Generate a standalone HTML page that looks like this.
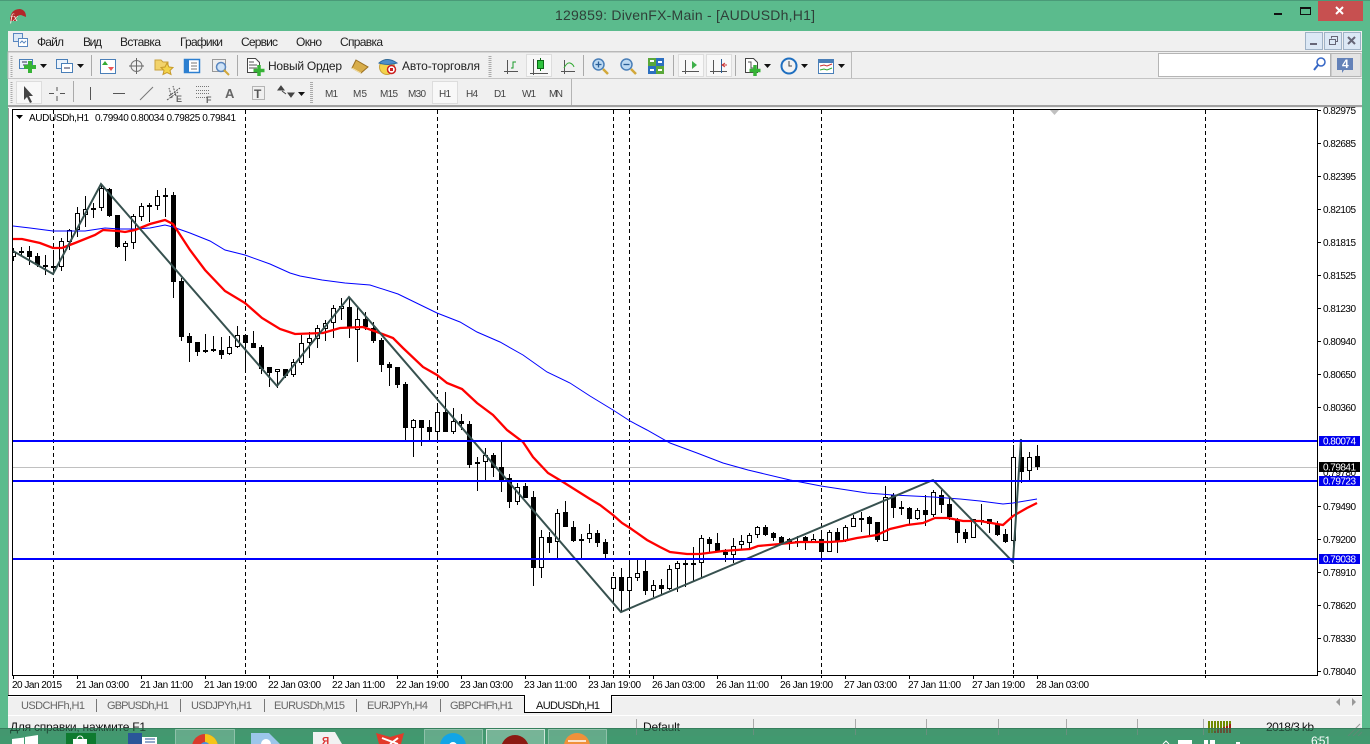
<!DOCTYPE html>
<html><head><meta charset="utf-8"><title>129859: DivenFX-Main</title>
<style>
html,body{margin:0;padding:0;width:1370px;height:744px;overflow:hidden;background:#5bbb8d}
svg{display:block;position:absolute;left:0;top:0}
text{font-family:"Liberation Sans",sans-serif;fill:#111}
.m{font-size:12px;fill:#222}
.tb{font-size:10px;fill:#444}
.p{font-size:10px;fill:#000}
.t{font-size:10px;fill:#000}
.tab{font-size:11px;fill:#666}
</style></head><body>
<svg width="1370" height="744" viewBox="0 0 1370 744" xmlns="http://www.w3.org/2000/svg">
<defs><clipPath id="c"><rect x="13" y="110" width="1304" height="565"/></clipPath></defs>
<!-- frame -->
<rect width="1370" height="744" fill="#5bbb8d"/>
<rect width="1370" height="1" fill="#4a9a78"/>
<text x="555" y="20" textLength="260" style="font-size:14px;fill:#2f3f38">129859: DivenFX-Main - [AUDUSDh,H1]</text>
<!-- logo -->
<path d="M10 21Q10 9 20 9Q26 10 26 17L21 15Q16 15 16 21Z" fill="#b3262a"/>
<text x="10" y="21" style="font-size:11px;font-style:italic;font-family:'Liberation Serif',serif;fill:#f4e8e0">fx</text>
<!-- window controls -->
<rect x="1274" y="13" width="8" height="2" fill="#111"/>
<rect x="1300.5" y="7.5" width="10" height="7" fill="none" stroke="#111"/><rect x="1300" y="7" width="11" height="2" fill="#111"/>
<rect x="1318" y="1" width="45" height="20" fill="#c75050"/>
<path d="M1336 7l7 7M1343 7l-7 7" stroke="#fff" stroke-width="2"/>
<!-- client -->
<rect x="8" y="31" width="1354" height="697" fill="#f0f0f0"/>
<rect x="8" y="51" width="1354" height="1" fill="#b4b4b4"/>
<rect x="8" y="105" width="1354" height="2" fill="#a0a0a0"/>
<!-- menu -->
<rect x="13.5" y="33.5" width="9" height="8" fill="#dce8f5" stroke="#5a87c0"/><rect x="18.5" y="38.5" width="9" height="8" fill="#fff" stroke="#5a87c0"/>
<path d="M20 43l2-2 2 2 2-2" stroke="#5a87c0" fill="none"/>
<text class="m" x="37" y="46" textLength="27">Файл</text>
<text class="m" x="83" y="46" textLength="19">Вид</text>
<text class="m" x="120" y="46" textLength="41">Вставка</text>
<text class="m" x="180" y="46" textLength="43">Графики</text>
<text class="m" x="241" y="46" textLength="37">Сервис</text>
<text class="m" x="296" y="46" textLength="26">Окно</text>
<text class="m" x="340" y="46" textLength="43">Справка</text>
<rect x="1305.5" y="32.5" width="17" height="17" fill="#dce8f5" stroke="#9fb2c6"/><rect x="1310" y="43" width="7" height="2" fill="#667"/>
<rect x="1324.5" y="32.5" width="17" height="17" fill="#dce8f5" stroke="#9fb2c6"/><path d="M1331.5 38.5v-2h6v5h-2M1329.5 39.5h6v5h-6z" fill="none" stroke="#667"/>
<rect x="1343.5" y="32.5" width="17" height="17" fill="#dce8f5" stroke="#9fb2c6"/><path d="M1348 37l7 7M1355 37l-7 7" stroke="#667" stroke-width="2"/>
<!-- toolbar 1 -->
<rect x="8" y="52" width="843.5" height="26.5" fill="#f0f0f0" stroke="#bbb"/>
<rect x="8" y="78" width="1354" height="1" fill="#c4c4c4"/>
<path d="M11.5 56v21" stroke="#aaa" stroke-dasharray="1 1" stroke-width="2"/>
<rect x="19.5" y="59.5" width="13" height="9" fill="#eaf2fb" stroke="#4a7fb8"/><path d="M22 62h5M23 65h6" stroke="#335"/>
<path d="M30 61v12M24 67h12" stroke="#36b336" stroke-width="4"/>
<path d="M40 64h7l-3.500 4z" fill="#111"/>
<rect x="56.500" y="59.500" width="11" height="9" fill="#eaf2fb" stroke="#4a7fb8"/><rect x="61.500" y="63.500" width="11" height="9" fill="#fff" stroke="#4a7fb8"/><path d="M64 68h6" stroke="#335"/>
<path d="M77 64h7l-3.500 4z" fill="#111"/>
<rect x="91" y="55" width="1" height="21" fill="#aaa"/>
<rect x="100.500" y="59.500" width="15" height="14" fill="#fff" stroke="#4a7fb8"/><path d="M105 61l-3 4h6z" fill="#3a3"/><path d="M111 71l3-4h-6z" fill="#e55"/>
<circle cx="136.500" cy="66" r="5.500" fill="none" stroke="#777"/><path d="M136.500 58v16M129 66h15" stroke="#666"/>
<path d="M155 60h6l2 2h5v8h-13z" fill="#f2d36b" stroke="#c9a23c"/><path d="M167 63l2 4 4 .5-3 3 1 4-4-2-4 2 1-4-3-3 4-.5z" fill="#f3d34a" stroke="#c79a2a"/>
<rect x="184.500" y="59.500" width="15" height="13" fill="#fff" stroke="#2c7fd0" stroke-width="1.500"/><rect x="185" y="60" width="4" height="12" fill="#2c7fd0"/><path d="M191 63h6M191 66h6M191 69h6" stroke="#777"/>
<rect x="212.500" y="59.500" width="13" height="12" fill="#eee" stroke="#999"/><circle cx="221" cy="67" r="4.500" fill="#cfe3f7" stroke="#5a87c0" stroke-width="1.500"/><path d="M224 70l5 5" stroke="#d2a83a" stroke-width="2"/>
<rect x="237" y="55" width="1" height="21" fill="#aaa"/>
<path d="M247.500 58.500h8l4 4v10h-12z" fill="#fff" stroke="#444"/><path d="M249 62h5M249 65h8M249 68h8" stroke="#555"/>
<path d="M259 65v11M253.500 70.500h11" stroke="#36b336" stroke-width="3.500"/>
<text x="268" y="70" textLength="74" style="font-size:12px;fill:#222">Новый Ордер</text>
<path d="M356 60l12 7-7 6-9-5z" fill="#d8ad4a" stroke="#9a6f20"/><path d="M352 68l9 5" stroke="#fbe7a8"/>
<circle cx="387" cy="67" r="7.500" fill="#f3d34a" stroke="#c9a23c"/><path d="M379 63q8-7 18 0q-9 3-18 0z" fill="#4d8fc9" stroke="#2c6aa0"/><circle cx="391.500" cy="69.500" r="4" fill="#fff" stroke="#c22" stroke-width="1.500"/><rect x="390" y="68" width="3" height="3" fill="#c22"/>
<text x="402" y="70" textLength="78" style="font-size:12px;fill:#222">Авто-торговля</text>
<path d="M490 56v21" stroke="#aaa" stroke-dasharray="1 1" stroke-width="3"/>
<path d="M507.500 60v14M504 71.500h14" fill="none" stroke="#555"/>
<path d="M511 68h2v-6h3" stroke="#1a9a2a" fill="none"/>
<rect x="526.500" y="54.500" width="25" height="22" fill="#f8f8f8" stroke="#ddd"/>
<path d="M533.500 59v16M530 73.500h18" fill="none" stroke="#555"/>
<path d="M540.500 58v13" stroke="#0a6a15"/><rect x="537.500" y="60.500" width="6" height="8" fill="#2ec23e" stroke="#0a6a15"/>
<path d="M564.500 60v14M561 71.500h14" stroke="#555" fill="none"/><path d="M564 68q3-6 6-5t4 4" stroke="#3a3" fill="none"/>
<rect x="583" y="55" width="1" height="21" fill="#aaa"/>
<circle cx="598.500" cy="64.500" r="5.500" fill="#bcd9f2" stroke="#4a7fb8" stroke-width="1.500"/><path d="M595.500 64.500h6M598.500 61.500v6" stroke="#2a5f98" stroke-width="1.300"/><path d="M603 69l5 5" stroke="#d2a83a" stroke-width="2.500"/>
<circle cx="626.500" cy="64.500" r="5.500" fill="#bcd9f2" stroke="#4a7fb8" stroke-width="1.500"/><path d="M623.500 64.500h6" stroke="#2a5f98" stroke-width="1.300"/><path d="M631 69l5 5" stroke="#d2a83a" stroke-width="2.500"/>
<rect x="648" y="58" width="8" height="8" fill="#5aa83a"/><rect x="656" y="58" width="8" height="8" fill="#2c6fc0"/><rect x="648" y="66" width="8" height="8" fill="#2c6fc0"/><rect x="656" y="66" width="8" height="8" fill="#5aa83a"/>
<path d="M650 61h4M658 62h4M650 70h4M658 70h4" stroke="#fff" stroke-width="2"/>
<rect x="673" y="55" width="1" height="21" fill="#aaa"/>
<rect x="678.500" y="54.500" width="25" height="22" fill="#f8f8f8" stroke="#ddd"/>
<path d="M685.500 60v14M682 71.500h17" fill="none" stroke="#555"/><path d="M692 61l5 4-5 4z" fill="#3fb04a"/>
<rect x="706.500" y="54.500" width="25" height="22" fill="#f8f8f8" stroke="#ddd"/>
<path d="M713.500 60v14M710 71.500h17" fill="none" stroke="#555"/><path d="M721.500 59v14" stroke="#2a5f98" fill="none"/><path d="M727 65h-4M725 63l-3 2 3 2" stroke="#c33" fill="none"/>
<rect x="735" y="55" width="1" height="21" fill="#aaa"/>
<path d="M745.500 58.500h8l4 4v10h-12z" fill="#fff" stroke="#444"/><path d="M748 62h3v6h3" stroke="#555" fill="none"/>
<path d="M755 65v11M749.500 70.500h11" stroke="#36b336" stroke-width="3.500"/>
<path d="M764 64h7l-3.500 4z" fill="#111"/>
<circle cx="789" cy="66" r="7.500" fill="#f3f3f3" stroke="#1f6fc0" stroke-width="2"/><path d="M789 61v5h3" stroke="#444" fill="none"/>
<path d="M801 64h7l-3.500 4z" fill="#111"/>
<rect x="818.500" y="59.500" width="15" height="14" fill="#fff" stroke="#4a7fb8"/><rect x="819" y="60" width="14" height="3" fill="#4a7fb8"/><path d="M820 66l4-1 3 1 5-2" stroke="#c33" fill="none"/><path d="M820 70l4-1 3 1 5-2" stroke="#3a3" fill="none"/>
<path d="M838 64h7l-3.500 4z" fill="#111"/>
<!-- search -->
<rect x="1158.500" y="53.500" width="172" height="23" fill="#fff" stroke="#b5b5b5"/>
<circle cx="1321" cy="62" r="4" fill="#fff" stroke="#3566c5" stroke-width="1.500"/><path d="M1318 65l-4 5" stroke="#3566c5" stroke-width="2"/>
<rect x="1331" y="53.500" width="30" height="23" fill="#e4e4e4" stroke="#b5b5b5"/>
<path d="M1337 58h16v12h-9l-2 3v-3h-5z" fill="#6482b8"/>
<text x="1342" y="68" style="font-size:12px;font-weight:bold;fill:#fff">4</text>
<!-- toolbar 2 -->
<rect x="571" y="79" width="1" height="26" fill="#b4b4b4"/>
<path d="M11.500 82v21" stroke="#aaa" stroke-dasharray="1 1" stroke-width="2"/>
<rect x="16.500" y="81.500" width="25" height="22" fill="#f8f8f8" stroke="#ddd"/>
<path d="M24 86v14l3-3 3 6 2-1-3-6h4z" fill="#444"/>
<path d="M57 87v4M57 96v5M49 93.500h5M60 93.500h5" stroke="#555" fill="none"/>
<rect x="73" y="81" width="1" height="21" fill="#aaa"/>
<path d="M90.500 87v13" stroke="#555" fill="none"/>
<path d="M113 93.500h12" stroke="#555" fill="none"/>
<path d="M140 100l13-13" stroke="#777" fill="none"/>
<path d="M167 100l11-8M169 96l11-8M172 98l-3-10M176 96l-3-10" stroke="#555" fill="none" stroke-dasharray="2 1"/>
<text x="176" y="102" style="font-size:9px;font-weight:bold;fill:#666">E</text>
<path d="M196 86.500h14M196 90.500h14M196 93.500h14M196 97.500h12" stroke="#777" stroke-dasharray="1 1" fill="none"/>
<text x="206" y="103" style="font-size:9px;font-weight:bold;fill:#666">F</text>
<text x="225" y="98" style="font-size:13px;font-weight:bold;fill:#666">A</text>
<rect x="252.500" y="86.500" width="12" height="13" fill="none" stroke="#777" stroke-dasharray="1 1"/>
<text x="254" y="98" style="font-size:12px;font-weight:bold;fill:#555">T</text>
<path d="M281 86l3 4h-6zM291 97l3-4h-6zM282 91l4 3" fill="#444" stroke="#444"/>
<path d="M298 92h7l-3.500 4z" fill="#111"/>
<path d="M311.500 82v21" stroke="#aaa" stroke-dasharray="1 1" stroke-width="3"/>
<rect x="432.500" y="81.500" width="25" height="22" fill="#f8f8f8" stroke="#ddd"/>
<text class="tb" x="325" y="97" textLength="13">M1</text>
<text class="tb" x="353" y="97" textLength="14">M5</text>
<text class="tb" x="380" y="97" textLength="18">M15</text>
<text class="tb" x="408" y="97" textLength="18">M30</text>
<text class="tb" x="439" y="97" textLength="12">H1</text>
<text class="tb" x="466" y="97" textLength="12">H4</text>
<text class="tb" x="494" y="97" textLength="12">D1</text>
<text class="tb" x="522" y="97" textLength="14">W1</text>
<text class="tb" x="549" y="97" textLength="14">MN</text>
<!-- chart panel -->
<rect x="8" y="108" width="1354" height="587" fill="#fff"/>
<rect x="8" y="108" width="1" height="587" fill="#9a9a9a"/>
<path d="M12.500 109v567M12 109.500h1306M1317.500 109v567M12 675.500h1306" stroke="#000" fill="none"/>
<g clip-path="url(#c)">
<path d="M53.500 110V675M245.500 110V675M437.500 110V675M613.500 110V675M629.500 110V675M821.500 110V675M1013.500 110V675M1205.500 110V675" stroke="#000" stroke-dasharray="4 3" fill="none"/>
<path d="M13 467.500H1317" stroke="#c0c0c0" fill="none"/>
<path shape-rendering="crispEdges" stroke="#000" fill="none" d="M13.500 248V261M21.500 247V256M29.500 246V265M37.500 253V267M45.500 255V275M53.500 252V275M61.500 238V271M69.500 229V250M77.500 207V237M85.500 196V227M93.500 203V218M101.500 184V211M109.500 188V217M117.500 215V248M125.500 241V261M133.500 214V249M141.500 203V221M149.500 203V222M157.500 190V210M165.500 188V217M173.500 192V298M181.500 278V341M189.500 333V362M197.500 342V356M205.500 334V353M213.500 336V352M221.500 337V359M229.500 336V355M237.500 326V348M245.500 335V369M253.500 331V348M261.500 345V374M269.500 367V387M277.500 369V388M285.500 369V378M293.500 359V377M301.500 335V365M309.500 332V358M317.500 325V348M325.500 320V341M333.500 305V338M341.500 298V320M349.500 297V338M357.500 308V362M365.500 312V330M373.500 322V343M381.500 338V372M389.500 362V386M397.500 367V388M405.500 382V441M413.500 419V457M421.500 420V446M429.500 420V441M437.500 403V441M445.500 392V432M453.500 408V434M461.500 414V430M469.500 421V468M477.500 457V491M485.500 448V480M493.500 453V477M501.500 441V492M509.500 474V508M517.500 483V505M525.500 483V498M533.500 491V586M541.500 530V578M549.500 532V553M557.500 509V559M565.500 501V527M573.500 521V542M581.500 534V559M589.500 524V543M597.500 530V547M605.500 539V559M613.500 577V603M621.500 568V612M629.500 560V608M637.500 560V581M645.500 560V595M653.500 580V597M661.500 579V595M669.500 565V590M677.500 561V592M685.500 560V587M693.500 547V582M701.500 535V577M709.500 537V553M717.500 533V552M725.500 549V562M733.500 538V563M741.500 535V550M749.500 533V550M757.500 526V538M765.500 525V536M773.500 532V541M781.500 536V545M789.500 538V550M797.500 536V547M805.500 536V550M813.500 534V543M821.500 530V560M829.500 530V552M837.500 528V553M845.500 525V542M853.500 515V527M861.500 512V532M869.500 516V537M877.500 522V542M885.500 486V541M893.500 493V518M901.500 501V515M909.500 507V525M917.500 508V520M925.500 495V526M933.500 490V517M941.500 490V513M949.500 498V520M957.500 518V543M965.500 529V543M973.500 519V538M981.500 504V525M989.500 519V533M997.500 521V536M1005.500 529V543M1013.500 445V548M1021.500 439V483M1029.500 452V480M1037.500 445V470"/>
<path shape-rendering="crispEdges" fill="#000" d="M19 251h5v2h-5zM27 251h5v6h-5zM35 256h5v9h-5zM43 265h5v2h-5zM51 266h5v2h-5zM91 208h5v2h-5zM107 189h5v27h-5zM115 215h5v32h-5zM147 205h5v2h-5zM163 195h5v2h-5zM171 195h5v87h-5zM179 281h5v56h-5zM187 336h5v7h-5zM195 342h5v10h-5zM203 350h5v2h-5zM211 349h5v2h-5zM219 350h5v5h-5zM243 335h5v8h-5zM251 343h5v5h-5zM259 347h5v22h-5zM267 367h5v6h-5zM283 369h5v7h-5zM347 307h5v21h-5zM363 319h5v8h-5zM371 328h5v13h-5zM379 340h5v25h-5zM387 364h5v4h-5zM395 367h5v18h-5zM403 384h5v44h-5zM419 420h5v8h-5zM427 427h5v5h-5zM443 412h5v20h-5zM459 421h5v3h-5zM467 424h5v41h-5zM491 455h5v13h-5zM499 467h5v13h-5zM507 478h5v24h-5zM523 486h5v12h-5zM531 497h5v71h-5zM547 537h5v6h-5zM563 512h5v15h-5zM571 527h5v14h-5zM579 539h5v2h-5zM595 533h5v10h-5zM603 542h5v12h-5zM619 577h5v14h-5zM643 571h5v20h-5zM659 585h5v4h-5zM683 563h5v2h-5zM691 563h5v2h-5zM707 539h5v5h-5zM715 543h5v9h-5zM723 552h5v3h-5zM763 527h5v8h-5zM771 533h5v5h-5zM779 537h5v6h-5zM787 539h5v5h-5zM795 541h5v2h-5zM803 537h5v5h-5zM819 539h5v13h-5zM835 532h5v9h-5zM859 518h5v2h-5zM867 517h5v7h-5zM875 522h5v18h-5zM891 495h5v13h-5zM899 507h5v2h-5zM907 508h5v11h-5zM923 510h5v5h-5zM939 495h5v10h-5zM947 504h5v13h-5zM955 520h5v13h-5zM963 532h5v7h-5zM979 520h5v2h-5zM987 519h5v5h-5zM995 524h5v11h-5zM1003 534h5v8h-5zM1019 457h5v15h-5zM1035 456h5v11h-5z"/>
<path shape-rendering="crispEdges" fill="#fff" stroke="#000" d="M11.500 252.500h4V256.500h-4zM59.500 241.500h4V266.500h-4zM67.500 230.500h4V241.500h-4zM75.500 213.500h4V229.500h-4zM83.500 209.500h4V214.500h-4zM99.500 188.500h4V207.500h-4zM123.500 243.500h4V246.500h-4zM131.500 216.500h4V242.500h-4zM139.500 206.500h4V216.500h-4zM155.500 196.500h4V205.500h-4zM227.500 347.500h4V353.500h-4zM235.500 335.500h4V346.500h-4zM275.500 369.500h4V371.500h-4zM291.500 362.500h4V374.500h-4zM299.500 343.500h4V362.500h-4zM307.500 338.500h4V342.500h-4zM315.500 328.500h4V338.500h-4zM323.500 323.500h4V328.500h-4zM331.500 308.500h4V322.500h-4zM339.500 306.500h4V308.500h-4zM355.500 319.500h4V329.500h-4zM411.500 420.500h4V427.500h-4zM435.500 412.500h4V431.500h-4zM451.500 421.500h4V431.500h-4zM475.500 462.500h4V463.500h-4zM483.500 455.500h4V461.500h-4zM515.500 487.500h4V501.500h-4zM539.500 537.500h4V567.500h-4zM555.500 513.500h4V541.500h-4zM587.500 533.500h4V538.500h-4zM611.500 577.500h4V588.500h-4zM627.500 577.500h4V590.500h-4zM635.500 573.500h4V577.500h-4zM651.500 585.500h4V590.500h-4zM667.500 569.500h4V588.500h-4zM675.500 563.500h4V568.500h-4zM699.500 538.500h4V562.500h-4zM731.500 546.500h4V554.500h-4zM739.500 541.500h4V544.500h-4zM747.500 535.500h4V542.500h-4zM755.500 527.500h4V534.500h-4zM811.500 539.500h4V542.500h-4zM827.500 532.500h4V551.500h-4zM843.500 527.500h4V540.500h-4zM851.500 518.500h4V526.500h-4zM883.500 497.500h4V540.500h-4zM915.500 510.500h4V518.500h-4zM931.500 492.500h4V514.500h-4zM971.500 519.500h4V537.500h-4zM1011.500 457.500h4V540.500h-4zM1027.500 457.500h4V470.500h-4z"/>
<!-- MA blue -->
<polyline fill="none" stroke="#0000ff" stroke-width="1" points="13,226 30,228 53,231 70,231 85,231 105,228 120,229 135,229 150,228 165,225 173,227 190,233 210,241 225,250 245,255 270,264 290,273 300,276 322,280 345,283 370,285 398,294 437,313 460,322 477,332 500,342 523,355 547,372 570,383 590,396 613,410 630,421 647,430 670,443 697,453 723,463 748,470 790,480 821,486 867,493 893,495 933,497 960,499 980,501 1003,504 1013,503 1037,499"/>
<!-- MA red -->
<polyline fill="none" stroke="#ff0000" stroke-width="2.300" points="13,239 22,239 40,243 53,248 62,248 75,243 95,235 103,230 118,231 125,232 135,230 150,224 165,220 173,224 190,250 205,270 225,291 245,303 262,318 280,329 295,334 323,333 340,328 363,327 377,332 393,338 403,348 423,367 437,375 447,383 462,389 477,403 493,415 507,430 523,442 533,457 548,473 563,482 590,499 600,505 613,515 622,523 630,528 647,540 660,547 670,552 687,554 700,554 723,551 750,549 758,546 780,544 800,542 830,542 843,541 857,538 877,535 890,529 907,525 923,523 935,518 948,518 963,521 980,521 1003,525 1013,516 1027,508 1037,503"/>
<!-- zigzag -->
<polyline fill="none" stroke="#37514f" stroke-width="2" points="13,251 53,274 101,184 277,386 349,297 621,612 933,480 1013,562 1021,439"/>
<!-- hlines -->
<path d="M13 441H1317M13 481H1317M13 559H1317" stroke="#0000ff" stroke-width="2" fill="none"/>
<path d="M1050 110h9l-4.500 5z" fill="#c0c0c0"/>
</g>
<!-- chart header -->
<path d="M16 115h7l-3.500 4z" fill="#000"/>
<text class="t" x="29" y="121" textLength="60">AUDUSDh,H1</text>
<text class="t" x="95" y="121" textLength="141">0.79940 0.80034 0.79825 0.79841</text>
<!-- price axis -->
<path stroke="#000" fill="none" d="M1318 110.500h3M1318 143.500h3M1318 176.500h3M1318 209.500h3M1318 242.500h3M1318 275.500h3M1318 308.500h3M1318 341.500h3M1318 374.500h3M1318 407.500h3M1318 506.500h3M1318 539.500h3M1318 572.500h3M1318 605.500h3M1318 638.500h3M1318 671.500h3"/>
<text class="p" x="1323" y="114" textLength="33">0.82975</text>
<text class="p" x="1323" y="147" textLength="33">0.82685</text>
<text class="p" x="1323" y="180" textLength="33">0.82395</text>
<text class="p" x="1323" y="213" textLength="33">0.82105</text>
<text class="p" x="1323" y="246" textLength="33">0.81815</text>
<text class="p" x="1323" y="279" textLength="33">0.81525</text>
<text class="p" x="1323" y="312" textLength="33">0.81230</text>
<text class="p" x="1323" y="345" textLength="33">0.80940</text>
<text class="p" x="1323" y="378" textLength="33">0.80650</text>
<text class="p" x="1323" y="411" textLength="33">0.80360</text>
<text class="p" x="1323" y="476" textLength="33">0.79780</text>
<text class="p" x="1323" y="510" textLength="33">0.79490</text>
<text class="p" x="1323" y="543" textLength="33">0.79200</text>
<text class="p" x="1323" y="576" textLength="33">0.78910</text>
<text class="p" x="1323" y="609" textLength="33">0.78620</text>
<text class="p" x="1323" y="642" textLength="33">0.78330</text>
<text class="p" x="1323" y="675" textLength="33">0.78040</text>
<rect x="1319" y="436" width="41" height="10" fill="#0000ee"/>
<text class="p" x="1323" y="444.500" textLength="33" style="fill:#fff">0.80074</text>
<rect x="1319" y="462" width="41" height="10" fill="#000"/>
<text class="p" x="1323" y="470.500" textLength="33" style="fill:#fff">0.79841</text>
<rect x="1319" y="476" width="41" height="10" fill="#0000ee"/>
<text class="p" x="1323" y="484.500" textLength="33" style="fill:#fff">0.79723</text>
<rect x="1319" y="554" width="41" height="10" fill="#0000ee"/>
<text class="p" x="1323" y="562.500" textLength="33" style="fill:#fff">0.79038</text>
<!-- time axis -->
<path stroke="#000" fill="none" d="M13.500 676v3M53.500 676v2M77.500 676v3M141.500 676v3M205.500 676v3M269.500 676v3M333.500 676v3M397.500 676v3M437.500 676v2M461.500 676v3M525.500 676v3M589.500 676v3M613.500 676v2M629.500 676v2M653.500 676v3M717.500 676v3M781.500 676v3M821.500 676v2M845.500 676v3M909.500 676v3M973.500 676v3M1013.500 676v2M1037.500 676v3M1205.500 676v2"/>
<text class="t" x="12" y="688" textLength="50">20 Jan 2015</text>
<text class="t" x="76" y="688" textLength="53">21 Jan 03:00</text>
<text class="t" x="140" y="688" textLength="53">21 Jan 11:00</text>
<text class="t" x="204" y="688" textLength="53">21 Jan 19:00</text>
<text class="t" x="268" y="688" textLength="53">22 Jan 03:00</text>
<text class="t" x="332" y="688" textLength="53">22 Jan 11:00</text>
<text class="t" x="396" y="688" textLength="53">22 Jan 19:00</text>
<text class="t" x="460" y="688" textLength="53">23 Jan 03:00</text>
<text class="t" x="524" y="688" textLength="53">23 Jan 11:00</text>
<text class="t" x="588" y="688" textLength="53">23 Jan 19:00</text>
<text class="t" x="652" y="688" textLength="53">26 Jan 03:00</text>
<text class="t" x="716" y="688" textLength="53">26 Jan 11:00</text>
<text class="t" x="780" y="688" textLength="53">26 Jan 19:00</text>
<text class="t" x="844" y="688" textLength="53">27 Jan 03:00</text>
<text class="t" x="908" y="688" textLength="53">27 Jan 11:00</text>
<text class="t" x="972" y="688" textLength="53">27 Jan 19:00</text>
<text class="t" x="1036" y="688" textLength="53">28 Jan 03:00</text>
<!-- tabs -->
<rect x="8" y="695" width="1354" height="20" fill="#f0f0f0"/>
<rect x="8" y="695" width="1354" height="1" fill="#000"/>
<rect x="8" y="696" width="1354" height="1" fill="#fff"/>
<path d="M524.500 695.500v17h87v-17" fill="#fff" stroke="#000"/>
<rect x="525" y="695" width="86" height="2" fill="#fff"/>
<path d="M96.500 699v13M180.500 699v13M264.500 699v13M356.500 699v13M440.500 699v13" stroke="#777" fill="none"/>
<text class="tab" x="21" y="709" textLength="64">USDCHFh,H1</text>
<text class="tab" x="107" y="709" textLength="62">GBPUSDh,H1</text>
<text class="tab" x="191" y="709" textLength="61">USDJPYh,H1</text>
<text class="tab" x="274" y="709" textLength="71">EURUSDh,M15</text>
<text class="tab" x="367" y="709" textLength="61">EURJPYh,H4</text>
<text class="tab" x="450" y="709" textLength="63">GBPCHFh,H1</text>
<text class="tab" x="536" y="709" textLength="64" style="fill:#111">AUDUSDh,H1</text>
<path d="M1340 698v8l-4-4zM1352 698v8l4-4z" fill="#999"/>
<rect x="8" y="715" width="1354" height="1" fill="#fff"/>
<!-- status -->
<text x="10" y="731" textLength="136" style="font-size:12px;fill:#111">Для справки, нажмите F1</text>
<text x="643" y="731" textLength="37" style="font-size:12px;fill:#111">Default</text>
<path d="M636.500 719v16M753.500 719v16M855.500 719v16M926.500 719v16M998.500 719v16M1066.500 719v16M1137.500 719v16M1203.500 719v16" stroke="#aaa" fill="none"/>
<path d="M1208 721h2v12h-2zM1211 721h2v12h-2zM1214 721h2v12h-2zM1217 721h2v12h-2zM1220 721h2v12h-2zM1223 721h2v12h-2zM1226 721h2v12h-2zM1229 721h2v12h-2z" fill="#6f8a00"/>
<path d="M1214 731h2v2h-2zM1217 729h2v4h-2zM1220 728h2v5h-2zM1223 727h2v6h-2zM1226 726h2v7h-2zM1229 724h2v9h-2z" fill="#a02010"/>
<text x="1266" y="731" textLength="48" style="font-size:12px;fill:#111">2018/3 kb</text>
<path d="M1348 736l12-12M1353 736l8-8M1358 736l4-4" stroke="#999" fill="none"/>
<!-- taskbar -->
<rect x="0" y="728" width="1370" height="8" fill="#2f7a58" fill-opacity=".55"/>
<rect x="0" y="736" width="1370" height="8" fill="#41996f"/>
<rect x="0" y="728" width="1370" height="1" fill="#2f6f52" fill-opacity=".6"/>
<rect x="175.500" y="729.500" width="59" height="15" fill="#fff" fill-opacity=".18" stroke="#fff" stroke-opacity=".35"/>
<rect x="424.500" y="729.500" width="58" height="15" fill="#fff" fill-opacity=".18" stroke="#fff" stroke-opacity=".35"/>
<rect x="486.500" y="729.500" width="58" height="15" fill="#fff" fill-opacity=".28" stroke="#fff" stroke-opacity=".7"/>
<rect x="548.500" y="729.500" width="58" height="15" fill="#fff" fill-opacity=".18" stroke="#fff" stroke-opacity=".35"/>
<path d="M12 739l12-1.500V744H12zM25 737l13-2v9H25z" fill="#fff"/>
<rect x="66" y="733" width="30" height="11" fill="#0e7a2f"/><rect x="73" y="739" width="14" height="5" fill="#fff"/><path d="M77 739a3 3 0 0 1 6 0" stroke="#fff" fill="none"/>
<rect x="128" y="737" width="29" height="7" fill="#fff"/><rect x="128" y="733" width="14" height="11" fill="#2a5699"/><path d="M145 739h10M145 742h10" stroke="#2a5699"/>
<circle cx="205" cy="747" r="13" fill="#d93a2b"/><path d="M205 734a13 13 0 0 1 13 13h-13z" fill="#f5c518"/><circle cx="205" cy="747" r="5" fill="#4a8fe0"/>
<path d="M251 733h18l11 11H251z" fill="#9cc6ea"/><circle cx="266" cy="744" r="5" fill="#fff"/>
<path d="M313 732h22l7 12H313z" fill="#f2f2f2"/><text x="322" y="744" style="font-size:10px;font-weight:bold;fill:#d33">Я</text>
<path d="M376 733l14 4 14-4-3 11h-22z" fill="#e23a2a"/><path d="M382 738l16 6M398 738l-8 6" stroke="#fff" stroke-width="2"/>
<circle cx="453" cy="746" r="13" fill="#12a5e6"/><circle cx="453" cy="746" r="4" fill="#fff"/>
<circle cx="515" cy="749" r="14" fill="#8b1a12"/>
<circle cx="577" cy="746" r="13" fill="#f0913a"/><path d="M568 741h18" stroke="#fff" stroke-width="1.500"/>
<path d="M1163 744l3-3 3 3" stroke="#fff" fill="none"/>
<rect x="1178" y="740" width="14" height="4" fill="#fff"/>
<rect x="1204" y="740" width="4" height="4" fill="#fff"/><rect x="1210" y="740" width="5" height="4" fill="#fff"/>
<rect x="1236" y="742" width="4" height="2" fill="#fff"/>
<text x="1311" y="745" textLength="20" style="font-size:12px;fill:#fff">6:51</text>
</svg>
</body></html>
